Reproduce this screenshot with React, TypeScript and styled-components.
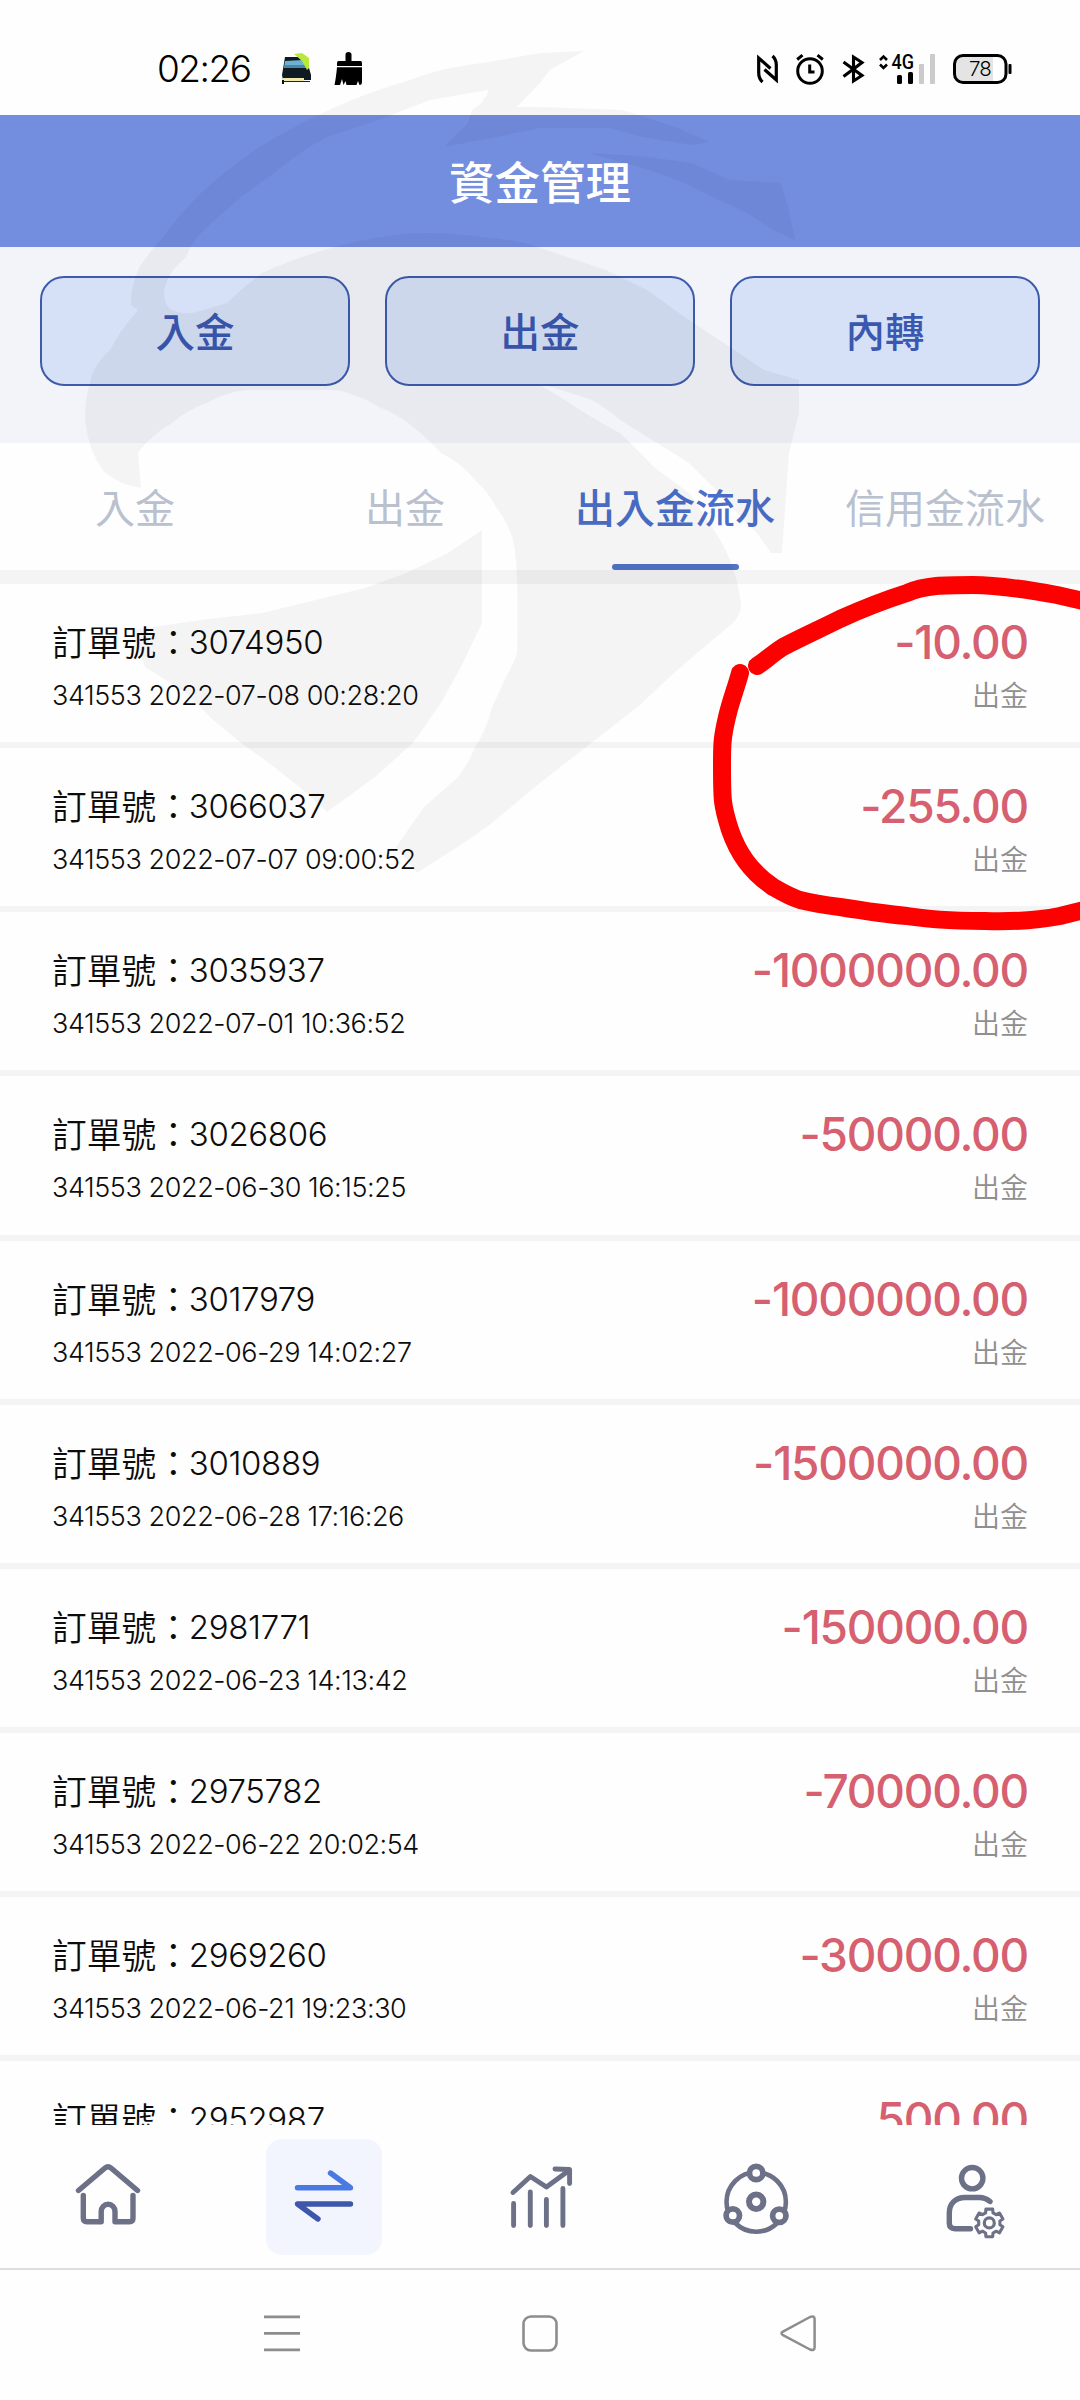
import React from 'react';
import styled, { createGlobalStyle } from 'styled-components';

const latin = `Inter, 'Noto Sans CJK TC', sans-serif`;
const cjk = `'Noto Sans CJK TC', sans-serif`;

const GlobalStyle = createGlobalStyle`
  * { box-sizing: border-box; }
  body { margin: 0; background: #fff; }
`;

const Screen = styled.div`
  position: relative;
  width: 1080px;
  height: 2400px;
  overflow: hidden;
  display: flex;
  flex-direction: column;
  background: #fefefe;
  font-family: ${cjk};
`;

const StatusBar = styled.div`
  flex: none;
  height: 115px;
  padding: 49px 69px 0 157px;
  display: flex;
  justify-content: space-between;
`;

const StatusGroup = styled.div<{ $gap: number }>`
  display: flex;
  align-items: center;
  gap: ${(p) => p.$gap}px;
  height: 40px;
`;

const Clock = styled.span`
  width: 101px;
  font: 350 37px/40px ${latin};
  letter-spacing: -1.5px;
  color: #000;
`;

const Glyph = styled.svg`
  display: block;
  flex: none;
  overflow: visible;
`;

const Header = styled.header`
  flex: none;
  height: 132px;
  padding-bottom: 3px;
  display: flex;
  align-items: center;
  justify-content: center;
  background: #738ddf;
`;

const Title = styled.h1`
  margin: 0;
  font: 500 45.5px/60px ${cjk};
  color: #fff;
`;

const Actions = styled.section`
  flex: none;
  height: 196px;
  padding: 29px 40px 0;
  display: grid;
  grid-template-columns: repeat(3, 310px);
  gap: 35px;
  align-items: start;
  background: #f3f4f9;
`;

const ActionButton = styled.button`
  height: 110px;
  padding: 0 0 3px;
  border: 2px solid #3c5bab;
  border-radius: 24px;
  background: #d6e0f6;
  font: 500 39.5px/58px ${cjk};
  color: #3a58b0;
`;

const Tabs = styled.nav`
  flex: none;
  height: 127px;
  display: grid;
  grid-template-columns: repeat(4, 1fr);
`;

const Tab = styled.div<{ $active?: boolean }>`
  display: flex;
  flex-direction: column;
  align-items: center;
  justify-content: space-between;
  padding-top: 34px;
  font: ${(p) => (p.$active ? 500 : 400)} 40px/58px ${cjk};
  color: ${(p) => (p.$active ? '#4a6fcb' : '#b9c0ce')};
  white-space: nowrap;
`;

const TabLine = styled.span`
  width: 127px;
  height: 6px;
  border-radius: 3px;
  background: #5274c8;
`;

const List = styled.main`
  flex: none;
  height: 1555px;
  overflow: hidden;
  border-top: 14px solid #f4f4f5;
`;

const Row = styled.article`
  display: flex;
  justify-content: space-between;
  height: 164.125px;
  padding: 33px 52px 0;
  border-bottom: 6px solid #f4f4f5;
`;

const Cell = styled.div<{ $end?: boolean }>`
  display: flex;
  flex-direction: column;
  align-items: ${(p) => (p.$end ? 'flex-end' : 'flex-start')};
  gap: 11px;
`;

const Order = styled.div`
  display: flex;
  font: 350 34.7px/48px ${cjk};
  color: #0c0c0c;
`;

const OrderNo = styled.span`
  margin-left: -2px;
  font: 350 33px/50px ${latin};
  letter-spacing: -0.35px;
`;

const Stamp = styled.div`
  font: 350 27px/36px ${latin};
  letter-spacing: -0.42px;
  color: #0c0c0c;
`;

const Amount = styled.div`
  font: 500 46px/50px ${latin};
  letter-spacing: -1.2px;
  color: #d65f70;
`;

const Kind = styled.div`
  margin-top: -2px;
  font: 350 28px/36px ${cjk};
  color: #8f8f8f;
`;

const BottomNav = styled.nav`
  flex: none;
  height: 145px;
  padding-top: 14px;
  display: grid;
  grid-template-columns: repeat(5, 1fr);
  justify-items: center;
  align-items: start;
  border-bottom: 2px solid #dedede;
`;

const NavItem = styled.div<{ $active?: boolean }>`
  width: 116px;
  height: 116px;
  border-radius: 16px;
  background: ${(p) => (p.$active ? '#f2f5fd' : 'transparent')};
`;

const SystemNav = styled.div`
  flex: none;
  height: 130px;
  padding: 0 153px 2px;
  display: grid;
  grid-template-columns: repeat(3, 1fr);
  justify-items: center;
  align-items: center;
`;

const Overlay = styled.svg`
  position: absolute;
  inset: 0;
  pointer-events: none;
`;

const Watermark = () => (
  <g fill="#000" fillOpacity="0.04">
    <path d="M584 51 L540 53 L482 63 Q440 68 413 79 Q368 92 331 109 Q290 128 255 150 Q222 173 200 194 Q178 216 165 235 Q144 258 138 270 Q130 290 131 305 L138 310 Q120 330 110 350 Q92 366 90 383 Q83 405 86 427 Q90 453 103 470 Q116 484 141 488 L138 453 Q150 436 172 423 Q187 410 207 403 Q225 392 248 390 L337 390 Q362 396 379 407 Q399 415 413 427 Q427 438 441 453 Q461 463 475 480 Q488 492 496 507 Q508 523 513 540 Q519 565 517 653 Q513 665 506 677 Q499 693 492 707 Q487 729 475 747 Q469 763 458 777 L424 807 L396 847 L417 873 L465 842 L492 823 L540 783 L640 705 L674 673 L709 643 L733 623 Q742 613 741 603 Q738 580 730 560 Q722 540 709 523 Q700 508 689 493 L654 467 Q638 450 620 433 Q590 417 565 400 L537 383 L551 387 L592 400 Q606 408 620 420 L689 463 L716 490 Q738 515 757 533 L771 553 L782 553 L789 453 L799 413 L799 380 L764 370 L730 347 L689 320 L647 290 L606 270 L541 248 Q515 239 482 237 Q430 230 396 235 Q355 240 324 250 Q290 260 262 273 Q242 288 227 303 L193 313 Q168 315 165 300 Q160 280 186 257 Q193 240 207 227 L241 197 L282 167 Q302 150 327 137 L379 120 L430 100 L489 90 Q484 103 472 110 L468 123 L444 147 L496 137 L540 128 L609 128 L643 137 L692 145 L709 142 L678 128 L623 110 L540 107 L517 107 L540 83 L550 70 Z" />
    <path d="M588 153 L640 156 L692 163 L729 180 L781 183 L788 207 L795 240 L774 230 L747 213 L719 200 L685 183 L650 170 Z" />
    <path d="M482 530 L482 623 L461 667 L441 703 L413 743 L375 777 L327 812 L303 790 L269 763 L241 743 L213 720 L186 693 L145 667 L132 630 L207 619 L262 613 L303 603 L365 588 L406 573 L448 553 Z" />
  </g>
);

const MarkerLoop = () => (
  <g fill="none" stroke="#fd0000" strokeWidth="18" strokeLinecap="round" strokeLinejoin="round">
    <path d="M757 666 C765 661 772 654 783 647 C800 638 820 629 840 619 C862 609 885 600 907 593 C925 585 945 585 973 585 C1000 585 1035 591 1057 595 L1092 603" />
    <path d="M740 673 C736 688 731 700 727 717 C722 738 722 745 722 765 C722 800 722 805 730 830 C738 853 750 871 773 887 C785 894 790 897 800 900 C812 903 825 905 840 907 C865 911 885 914 907 916 C930 919 945 921 985 921 C1020 922 1040 920 1060 916 L1092 908" />
  </g>
);

const ink = '#6c7187';

const HomeIcon = () => (
  <Glyph width="116" height="116" fill="none" stroke={ink} strokeWidth="5.4" strokeLinecap="round" strokeLinejoin="round">
    <path d="M28.500 51.500 L55 29 Q58 26.500 61 29 L87.500 51.500" />
    <path d="M33.300 56.500 V79 Q33.300 82.700 37 82.700 H51.200 V72.500 A6.900 7.200 0 0 1 65 72.500 V82.700 H79.500 Q83 82.700 83 79 V56.500" />
  </Glyph>
);

const TransferIcon = () => (
  <Glyph width="116" height="116" fill="none" strokeWidth="5.400" strokeLinecap="round" strokeLinejoin="round">
    <path d="M31.500 48.700 H84.500 L64.500 34" stroke="#4a79e3" />
    <path d="M84.500 65 H31.500 L52 80" stroke="#3d57ab" />
  </Glyph>
);

const ChartIcon = () => (
  <Glyph width="116" height="116" fill="none" stroke={ink} strokeWidth="4.900" strokeLinecap="round" strokeLinejoin="round">
    <path d="M31 53.500 L48.400 37.500 L64.400 48 L87 31.500" />
    <path d="M73 30 L87.600 30.500 V44.500" />
    <path d="M31.600 64.500 V86.500 M48.300 53 V86.500 M64.400 60.500 V86.500 M80.900 49.500 V86.500" />
  </Glyph>
);

const NetworkIcon = () => (
  <Glyph width="116" height="116" fill="#fefefe" stroke={ink} strokeWidth="5.700">
    <circle cx="58.200" cy="63" r="29.700" strokeWidth="4.600" />
    <circle cx="58.200" cy="34" r="6.700" />
    <circle cx="34.800" cy="76.500" r="6.700" />
    <circle cx="81.300" cy="76.800" r="6.700" />
    <circle cx="58.200" cy="62.800" r="7.200" strokeWidth="6" />
  </Glyph>
);

const gearPoints = Array.from({ length: 6 }, (_, k) => {
  const base = -90 + k * 60;
  return [
    [-20, 10.8],
    [-14, 14.2],
    [14, 14.2],
    [20, 10.8],
  ].map(([d, r]) => {
    const a = ((base + d) * Math.PI) / 180;
    return `${(75.3 + r * Math.cos(a)).toFixed(1)},${(83.9 + r * Math.sin(a)).toFixed(1)}`;
  });
})
  .flat()
  .join(' ');

const ProfileIcon = () => (
  <Glyph width="116" height="116" fill="none" stroke={ink} strokeWidth="5.400" strokeLinecap="round" strokeLinejoin="round">
    <circle cx="58.200" cy="39.200" r="10.700" />
    <path d="M76 62.500 Q71 58.500 66 58.500 H51 C41 58.500 35.300 65 35.300 74 V84 Q35.300 89.700 41 89.700 H56.500" />
    <polygon points={gearPoints} strokeWidth="3.100" />
    <circle cx="75.300" cy="83.900" r="5" strokeWidth="3.200" />
  </Glyph>
);

const CarIcon = () => (
  <Glyph width="32" height="33">
    <path d="M4 4 H25 L30 22 V27 H2 L1 22 Z" fill="#111a23" />
    <path d="M4 8 L22 7 L25 15 H3 Z" fill="#6cb0d2" />
    <path d="M4 12 H25 L26 15 H3 Z" fill="#4a86a8" />
    <path d="M13 1 L21 0 L28 5 V15 L26 17 L21 8 Z" fill="#b9e83a" />
    <path d="M2 25 H23 V28 H2 Z" fill="#efe9ad" />
    <path d="M2 28.500 H29" stroke="#222" strokeWidth="1" />
    <path d="M2 27 V31" stroke="#111" strokeWidth="2" />
  </Glyph>
);

const BrushIcon = () => (
  <Glyph width="28" height="34">
    <g transform="translate(-1.5 0)">
      <path d="M11 2.500 Q11 0 14 0 T17 2.500 V9 H26 Q27.500 9 27.500 11 V14 H2.500 V11 Q2.500 9 4 9 H11 Z" />
      <path d="M2.500 15.300 H27.500 V30 Q27.500 33 25 33 L23.500 29 L22 33 H12 L11 29 L9 33 L7.500 27 L5.500 33 H0 Q1.500 26 2.500 15.300 Z" />
    </g>
  </Glyph>
);

const NfcIcon = () => (
  <Glyph width="21" height="32" fill="none" stroke="#000" strokeWidth="3.200">
    <path d="M5.500 29 Q1.700 25.500 1.700 20 V5 L13.500 15.500" />
    <path d="M15.500 3 Q19.300 6.500 19.300 12 V27 L7.500 16.500" />
  </Glyph>
);

const AlarmIcon = () => (
  <Glyph width="28" height="32" fill="none" stroke="#000" strokeWidth="3">
    <circle cx="14" cy="18" r="12.300" />
    <path d="M13.700 11.500 V19 H18.500" />
    <path d="M1.200 6.500 L6.500 2.200 M26.800 6.500 L21.500 2.200" />
  </Glyph>
);

const BluetoothIcon = () => (
  <Glyph width="22" height="32" fill="none" stroke="#000" strokeWidth="3.100">
    <path d="M1.500 9 L20 22.500 L11.500 28 V4 L20 9.500 L1.500 23.500" />
  </Glyph>
);

const SignalIcon = () => (
  <Glyph width="53" height="32">
    <path d="M-2 7 L1.500 3.500 L5 7 M-2 11.500 L1.500 15 L5 11.500" fill="none" stroke="#000" strokeWidth="2.600" />
    <text x="9.500" y="16" fontFamily="Roboto, sans-serif" fontWeight="500" fontSize="20.500" textLength="22.500" lengthAdjust="spacingAndGlyphs">4G</text>
    <rect x="15" y="22" width="5" height="9" rx="1.500" />
    <rect x="26" y="19" width="5" height="12" rx="1.500" />
    <rect x="37" y="11" width="5" height="20" rx="1" fill="#cbcbcb" />
    <rect x="48" y="1" width="5" height="30" rx="1" fill="#cbcbcb" />
  </Glyph>
);

const BatteryIcon = () => (
  <Glyph width="58" height="32">
    <path d="M9 3 H40 V29 H9 Q2 28 2 20 V12 Q2 4 9 3 Z" fill="#e4e4e4" />
    <rect x="1.500" y="2.500" width="51.500" height="27" rx="8.500" fill="none" stroke="#000" strokeWidth="3" />
    <rect x="55.500" y="11" width="3" height="10" rx="1" />
    <text x="27" y="23.200" textAnchor="middle" fontFamily="Inter, sans-serif" fontWeight="300" fontSize="20.500" letterSpacing="-0.800">78</text>
  </Glyph>
);

const MenuKey = () => (
  <Glyph width="36" height="38" stroke="#8d8d8d" strokeWidth="2.800">
    <path d="M0 1.800 H36 M0 18.300 H36 M0 34.800 H36" />
  </Glyph>
);

const HomeKey = () => (
  <Glyph width="36" height="38" fill="none" stroke="#8d8d8d" strokeWidth="2.600">
    <rect x="1.500" y="1.500" width="33" height="34" rx="7.500" />
  </Glyph>
);

const BackKey = () => (
  <Glyph width="36" height="38" fill="none" stroke="#8d8d8d" strokeWidth="2.500" strokeLinejoin="round">
    <path d="M2.500 16.800 L30 2 Q34.600 0.500 34.600 4 V32.500 Q34.600 36 30 34.500 L2.500 19.800 Q0.500 18.300 2.500 16.800 Z" />
  </Glyph>
);

const records = [
  ['3074950', '2022-07-08 00:28:20', '-10.00'],
  ['3066037', '2022-07-07 09:00:52', '-255.00'],
  ['3035937', '2022-07-01 10:36:52', '-1000000.00'],
  ['3026806', '2022-06-30 16:15:25', '-50000.00'],
  ['3017979', '2022-06-29 14:02:27', '-1000000.00'],
  ['3010889', '2022-06-28 17:16:26', '-1500000.00'],
  ['2981771', '2022-06-23 14:13:42', '-150000.00'],
  ['2975782', '2022-06-22 20:02:54', '-70000.00'],
  ['2969260', '2022-06-21 19:23:30', '-30000.00'],
  ['2952987', '', '500.00'],
];

export default function App() {
  return (
    <Screen lang="zh-Hant">
      <GlobalStyle />
      <StatusBar>
        <StatusGroup $gap={23}>
          <Clock>02:26</Clock>
          <CarIcon />
          <BrushIcon />
        </StatusGroup>
        <StatusGroup $gap={18}>
          <NfcIcon />
          <AlarmIcon />
          <BluetoothIcon />
          <SignalIcon />
          <BatteryIcon />
        </StatusGroup>
      </StatusBar>
      <Header>
        <Title>資金管理</Title>
      </Header>
      <Actions>
        <ActionButton>入金</ActionButton>
        <ActionButton>出金</ActionButton>
        <ActionButton>內轉</ActionButton>
      </Actions>
      <Tabs>
        <Tab>入金</Tab>
        <Tab>出金</Tab>
        <Tab $active>
          出入金流水
          <TabLine />
        </Tab>
        <Tab>信用金流水</Tab>
      </Tabs>
      <List>
        {records.map(([no, time, amount]) => (
          <Row key={no}>
            <Cell>
              <Order>
                訂單號：<OrderNo>{no}</OrderNo>
              </Order>
              {time && <Stamp>341553 {time}</Stamp>}
            </Cell>
            <Cell $end>
              <Amount>{amount}</Amount>
              {time && <Kind>出金</Kind>}
            </Cell>
          </Row>
        ))}
      </List>
      <BottomNav>
        <NavItem><HomeIcon /></NavItem>
        <NavItem $active><TransferIcon /></NavItem>
        <NavItem><ChartIcon /></NavItem>
        <NavItem><NetworkIcon /></NavItem>
        <NavItem><ProfileIcon /></NavItem>
      </BottomNav>
      <SystemNav>
        <MenuKey />
        <HomeKey />
        <BackKey />
      </SystemNav>
      <Overlay width="1080" height="2400" viewBox="0 0 1080 2400">
        <Watermark />
        <MarkerLoop />
      </Overlay>
    </Screen>
  );
}
